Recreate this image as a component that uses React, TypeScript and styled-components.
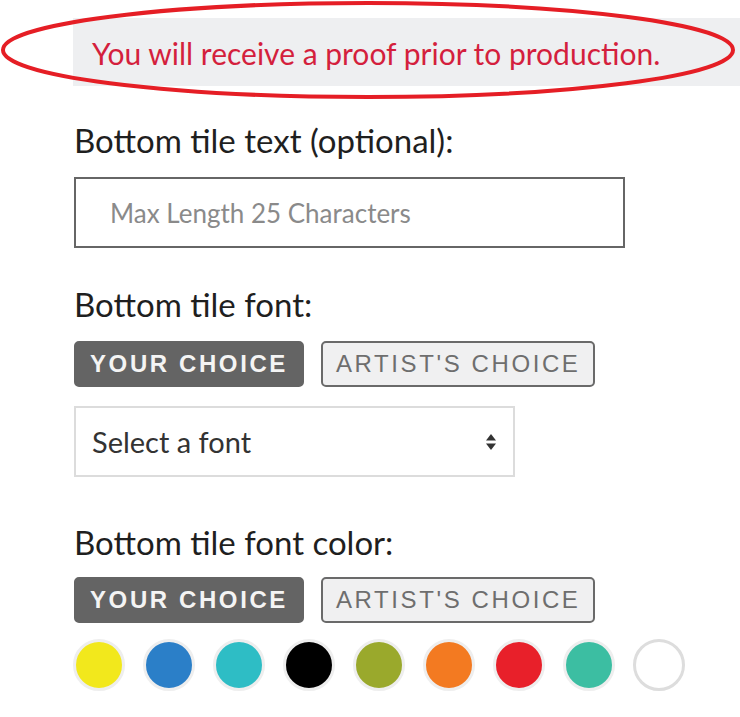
import React from "react";
import styled, { createGlobalStyle } from "styled-components";

const Global = createGlobalStyle`
  html, body { margin: 0; padding: 0; background: #ffffff; }
  body { font-family: Lato, "Open Sans", sans-serif; }
`;

const Page = styled.div`
  position: relative;
  width: 740px;
  height: 717px;
  padding-top: 18px;
  box-sizing: border-box;
  overflow: hidden;
`;

const Banner = styled.div`
  margin-left: 73px;
  height: 68px;
  background: #eeeff1;
  display: flex;
  align-items: center;
  padding-left: 19px;
  box-sizing: border-box;
`;

const BannerText = styled.span`
  font-family: Lato, sans-serif;
  font-size: 30px;
  line-height: 34px;
  color: #d41f3d;
  margin-top: 2px;
`;

const Ellipse = styled.svg`
  position: absolute;
  left: 0;
  top: 0;
  pointer-events: none;
`;

const Form = styled.div`
  display: flex;
  flex-direction: column;
  padding-left: 74px;
`;

const Section = styled.div<{ $top: number }>`
  display: flex;
  flex-direction: column;
  margin-top: ${(p) => p.$top}px;
`;

const Label = styled.div`
  font-family: Lato, sans-serif;
  font-size: 33px;
  line-height: 36px;
  color: #1f1f1f;
`;

const TextInput = styled.div`
  margin-top: 19px;
  width: 551px;
  height: 71px;
  border: 2px solid #666;
  box-sizing: border-box;
  display: flex;
  align-items: center;
  padding-left: 34px;
  font-family: Lato, sans-serif;
  font-size: 26px;
  color: #8a8a8a;
`;

const ToggleRow = styled.div<{ $top: number }>`
  display: flex;
  gap: 17px;
  margin-top: ${(p) => p.$top}px;
`;

const Toggle = styled.div<{ $active?: boolean }>`
  height: 46px;
  box-sizing: border-box;
  padding: 0 ${(p) => (p.$active ? 14 : 13)}px;
  border-radius: 5px;
  display: flex;
  align-items: center;
  font-family: "Liberation Sans", Arial, sans-serif;
  font-size: 24px;
  letter-spacing: 2.6px;
  font-weight: ${(p) => (p.$active ? 700 : 400)};
  color: ${(p) => (p.$active ? "#f4f4f4" : "#6e6e6e")};
  background: ${(p) => (p.$active ? "#646464" : "#f0f0f1")};
  border: 2px solid ${(p) => (p.$active ? "#646464" : "#6a6a6a")};
`;

const Select = styled.div`
  margin-top: 19px;
  width: 441px;
  height: 71px;
  border: 2px solid #dcdcdc;
  box-sizing: border-box;
  display: flex;
  align-items: center;
  justify-content: space-between;
  padding: 0 16px 0 16px;
  font-family: Lato, sans-serif;
  font-size: 29px;
  color: #333;
`;

const Swatches = styled.div`
  display: flex;
  gap: 18px;
  margin-top: 16px;
  margin-left: -1px;
`;

const Swatch = styled.div<{ $color: string }>`
  width: 52px;
  height: 52px;
  border-radius: 50%;
  box-sizing: border-box;
  background: ${(p) => p.$color};
  border: 3px solid ${(p) => (p.$color === "#ffffff" ? "#dddddd" : "#eeeeee")};
`;

const colors = [
  "#f2e81c",
  "#2b7fc8",
  "#2ebdc5",
  "#000000",
  "#9aa92c",
  "#f37a21",
  "#e8202a",
  "#3cbea2",
  "#ffffff",
];

const SortIcon = () => (
  <svg width="12" height="18" viewBox="0 0 12 18">
    <path d="M6 1 L11 7.5 L1 7.5 Z" fill="#333" />
    <path d="M6 17 L11 10.5 L1 10.5 Z" fill="#333" />
  </svg>
);

const Choice = ({ top }: { top: number }) => (
  <ToggleRow $top={top}>
    <Toggle $active>YOUR CHOICE</Toggle>
    <Toggle>ARTIST'S CHOICE</Toggle>
  </ToggleRow>
);

export default function App() {
  return (
    <>
      <Global />
      <Page>
        <Banner>
          <BannerText>You will receive a proof prior to production.</BannerText>
        </Banner>
        <Ellipse width="740" height="102" viewBox="0 0 740 102">
          <ellipse cx="368" cy="50" rx="365" ry="47" fill="none" stroke="#e51e25" strokeWidth="4" />
        </Ellipse>
        <Form>
          <Section $top={36}>
            <Label>Bottom tile text (optional):</Label>
            <TextInput>Max Length 25 Characters</TextInput>
          </Section>
          <Section $top={38}>
            <Label>Bottom tile font:</Label>
            <Choice top={19} />
            <Select>
              <span>Select a font</span>
              <SortIcon />
            </Select>
          </Section>
          <Section $top={47}>
            <Label>Bottom tile font color:</Label>
            <Choice top={17} />
            <Swatches>
              {colors.map((c) => (
                <Swatch key={c} $color={c} />
              ))}
            </Swatches>
          </Section>
        </Form>
      </Page>
    </>
  );
}
